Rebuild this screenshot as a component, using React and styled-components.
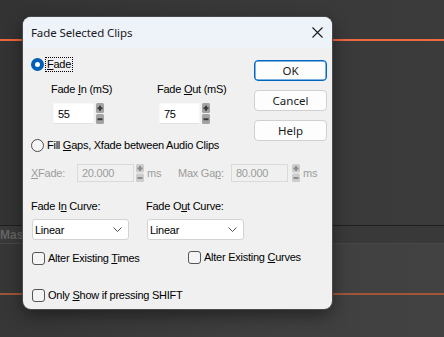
import React from 'react'
import styled, { createGlobalStyle } from 'styled-components'

const Global = createGlobalStyle`
  html, body { margin: 0; padding: 0; background: #363636; }
  body { width: 444px; height: 337px; overflow: hidden; }
`

const Stage = styled.div`
  position: relative;
  width: 444px;
  height: 337px;
  overflow: hidden;
  display: flex;
  flex-direction: column;
  background: #363636;
`

const TrackTop = styled.div`
  height: 225px;
  background: linear-gradient(90deg, #333 0%, #393939 60%, #3b3b3b 100%);
  display: flex;
  flex-direction: column;
`

const Wire = styled.div`
  height: 2px;
  margin-top: ${p => p.$top}px;
  background: ${p => p.$color};
`

const Divider = styled.div`
  height: 1px;
  background: ${p => p.$color};
`

const MasterBand = styled.div`
  height: 17px;
  background: #393939;
  display: flex;
  align-items: center;
  font-family: "Liberation Sans", Arial, sans-serif;
  font-weight: bold;
  font-size: 12px;
  color: #636363;
`

const TrackLow = styled.div`
  flex: 1;
  background: linear-gradient(90deg, #363636 0%, #3f3f3f 60%, #424242 100%);
  display: flex;
  flex-direction: column;
`

const Dialog = styled.div`
  position: absolute;
  left: 23px;
  top: 17px;
  width: 309px;
  height: 292px;
  border-radius: 8px;
  overflow: hidden;
  background: #f0f0f0;
  box-shadow: 0 0 0 1px #4a4a4a, 0 6px 18px rgba(0, 0, 0, 0.45);
  display: flex;
  flex-direction: column;
  font-family: Tahoma, "Liberation Sans", Arial, sans-serif;
  font-size: 11px;
  letter-spacing: -0.25px;
  color: #000;
`

const TitleBar = styled.div`
  height: 31px;
  flex: none;
  background: #eef2f9;
  display: flex;
  align-items: center;
  justify-content: space-between;
  padding: 0 9px 0 8px;
  font-family: "Noto Sans", "Open Sans", sans-serif;
  font-size: 11.5px;
  letter-spacing: -0.1px;
  color: #1a1a1a;
`

const Body = styled.div`
  flex: 1;
  display: flex;
  flex-direction: column;
  padding: 0 5px 0 8px;
`

const TopSection = styled.div`
  display: flex;
  justify-content: space-between;
`

const LeftCol = styled.div`
  display: flex;
  flex-direction: column;
`

const ButtonCol = styled.div`
  width: 73px;
  padding-top: 12px;
  display: flex;
  flex-direction: column;
  gap: 9px;
`

const DlgButton = styled.button`
  height: 21px;
  padding: 0;
  border-radius: 4px;
  background: #fdfdfd;
  border: 1px solid ${p => (p.$default ? '#0067c0' : '#d0d0d0')};
  box-shadow: ${p => (p.$default ? 'inset 0 0 0 0.5px #0067c0' : 'none')};
  font-family: "Noto Sans", "Open Sans", sans-serif;
  font-size: 11.5px;
  color: #1a1a1a;
  line-height: 19px;
`

const Row = styled.div`
  display: flex;
  align-items: center;
  height: ${p => p.$h || 13}px;
  margin-top: ${p => p.$top || 0}px;
`

const Text = styled.span`
  line-height: 13px;
  white-space: nowrap;
  color: ${p => (p.$disabled ? '#9c9c9c' : '#000')};
  width: ${p => (p.$w ? `${p.$w}px` : 'auto')};
  margin-left: ${p => p.$gap || 0}px;
  flex: none;
`

const Focus = styled.span`
  outline: 1px dotted #000;
  padding: 0 1px;
  margin-left: 2px;
  line-height: 13px;
`

const Radio = styled.span`
  width: 13px;
  height: 13px;
  box-sizing: border-box;
  border-radius: 50%;
  flex: none;
  background: ${p => (p.$on ? '#ffffff' : '#f6f6f6')};
  border: ${p => (p.$on ? '4px solid #005fb8' : '1px solid #4d4d4d')};
`

const Check = styled.span`
  width: 13px;
  height: 13px;
  box-sizing: border-box;
  border: 1px solid #555;
  border-radius: 3px;
  background: #f4f4f4;
  flex: none;
  margin-right: 3px;
`

const FieldGrid = styled.div`
  display: grid;
  grid-template-columns: 106px 60px;
  padding-left: 20px;
  margin-top: 12px;
  row-gap: 7px;
`

const Field = styled.div`
  display: flex;
  align-items: flex-start;
  gap: 2px;
  margin-left: 2px;
`

const Input = styled.div`
  width: ${p => p.$w}px;
  height: ${p => p.$h}px;
  box-sizing: border-box;
  background: ${p => (p.$disabled ? '#f0f0f0' : '#ffffff')};
  border: 1px solid ${p => (p.$disabled ? '#dadada' : '#f8f8f8')};
  border-bottom-color: ${p => (p.$disabled ? '#dadada' : '#e2e2e2')};
  padding-left: 4px;
  display: flex;
  align-items: center;
  color: ${p => (p.$disabled ? '#9c9c9c' : '#000')};
  flex: none;
`

const Combo = styled.div`
  width: 97px;
  height: 21px;
  box-sizing: border-box;
  background: #fff;
  border: 1px solid #d3d3d3;
  border-radius: 3px;
  display: flex;
  align-items: center;
  justify-content: space-between;
  padding: 0 6px 0 2px;
  margin-left: 1px;
`

const CurveGrid = styled.div`
  display: grid;
  grid-template-columns: 115px 115px;
  margin-top: 18px;
  row-gap: 6px;
`

const CheckRow = styled.div`
  display: flex;
  align-items: flex-start;
  margin-top: ${p => p.$top}px;
  padding-left: 1px;
`

const CheckItem = styled.div`
  display: flex;
  align-items: center;
  width: ${p => (p.$w ? `${p.$w}px` : 'auto')};
  margin-top: ${p => p.$shift || 0}px;
  height: 14px;
`

const Spacer = styled.span`
  width: ${p => p.$w}px;
  flex: none;
`

const Spin = ({ h = 21, disabled }) => {
  const half = h / 2
  const bg = disabled ? '#cdcdcd' : '#a3a3a3'
  const fg = disabled ? '#8c8c8c' : '#3a3a3a'
  return (
    <svg width="8" height={h} viewBox={`0 0 8 ${h}`} style={{ flex: 'none' }}>
      <rect x="0" y="0" width="8" height={half - 0.5} rx="1.5" fill={bg} />
      <rect x="0" y={half + 0.5} width="8" height={half - 0.5} rx="1.5" fill={bg} />
      <path d={`M1.5 ${half / 2} H6.5 M4 ${half / 2 - 2.5} V${half / 2 + 2.5}`} stroke={fg} strokeWidth="2" />
      <path d={`M1.5 ${half + half / 2 + 0.5} H6.5`} stroke={fg} strokeWidth="2" />
    </svg>
  )
}

const Chevron = () => (
  <svg width="9" height="5" viewBox="0 0 9 5">
    <path d="M0.5 0.5 L4.5 4.5 L8.5 0.5" fill="none" stroke="#505050" strokeWidth="1" />
  </svg>
)

const CloseX = () => (
  <svg width="11" height="11" viewBox="0 0 11 11">
    <path d="M0.5 0.5 L10.5 10.5 M10.5 0.5 L0.5 10.5" stroke="#1a1a1a" strokeWidth="1.1" />
  </svg>
)

const App = () => {
  return (
    <Stage>
      <Global />
      <TrackTop>
        <Wire $top={39} $color="#f0683d" />
      </TrackTop>
      <Divider $color="#1f1f1f" />
      <MasterBand>Mast</MasterBand>
      <Divider $color="#474747" />
      <TrackLow>
        <Wire $top={49} $color="#9e5538" />
      </TrackLow>

      <Dialog>
        <TitleBar>
          <span>Fade Selected Clips</span>
          <CloseX />
        </TitleBar>
        <Body>
          <TopSection>
            <LeftCol>
              <Row $top={10}>
                <Radio $on />
                <Focus><u>F</u>ade</Focus>
              </Row>
              <FieldGrid>
                <Text>Fade <u>I</u>n (mS)</Text>
                <Text>Fade <u>O</u>ut (mS)</Text>
                <Field>
                  <Input $w={41} $h={21}>55</Input>
                  <Spin />
                </Field>
                <Field>
                  <Input $w={41} $h={21}>75</Input>
                  <Spin />
                </Field>
              </FieldGrid>
              <Row $top={15}>
                <Radio />
                <Text $gap={3}>Fill <u>G</u>aps, Xfade between Audio Clips</Text>
              </Row>
            </LeftCol>
            <ButtonCol>
              <DlgButton $default>OK</DlgButton>
              <DlgButton>Cancel</DlgButton>
              <DlgButton>Help</DlgButton>
            </ButtonCol>
          </TopSection>

          <Row $top={12} $h={18}>
            <Text $disabled $w={46}><u>X</u>Fade:</Text>
            <Input $disabled $w={57} $h={18}>20.000</Input>
            <Spacer $w={2} />
            <Spin h={18} disabled />
            <Text $disabled $w={31} $gap={3}>ms</Text>
            <Text $disabled $w={53}>Max Ga<u>p</u>:</Text>
            <Input $disabled $w={57} $h={18}>80.000</Input>
            <Spacer $w={4} />
            <Spin h={18} disabled />
            <Text $disabled $gap={3}>ms</Text>
          </Row>

          <CurveGrid>
            <Text>Fade I<u>n</u> Curve:</Text>
            <Text>Fade O<u>u</u>t Curve:</Text>
            <Combo>Linear<Chevron /></Combo>
            <Combo>Linear<Chevron /></Combo>
          </CurveGrid>

          <CheckRow $top={11}>
            <CheckItem $w={156}>
              <Check />
              <Text>Alter Existing <u>T</u>imes</Text>
            </CheckItem>
            <CheckItem $shift={-1}>
              <Check />
              <Text>Alter Existing <u>C</u>urves</Text>
            </CheckItem>
          </CheckRow>

          <CheckRow $top={23}>
            <CheckItem>
              <Check />
              <Text>Only <u>S</u>how if pressing SHIFT</Text>
            </CheckItem>
          </CheckRow>
        </Body>
      </Dialog>
    </Stage>
  )
}

export default App
